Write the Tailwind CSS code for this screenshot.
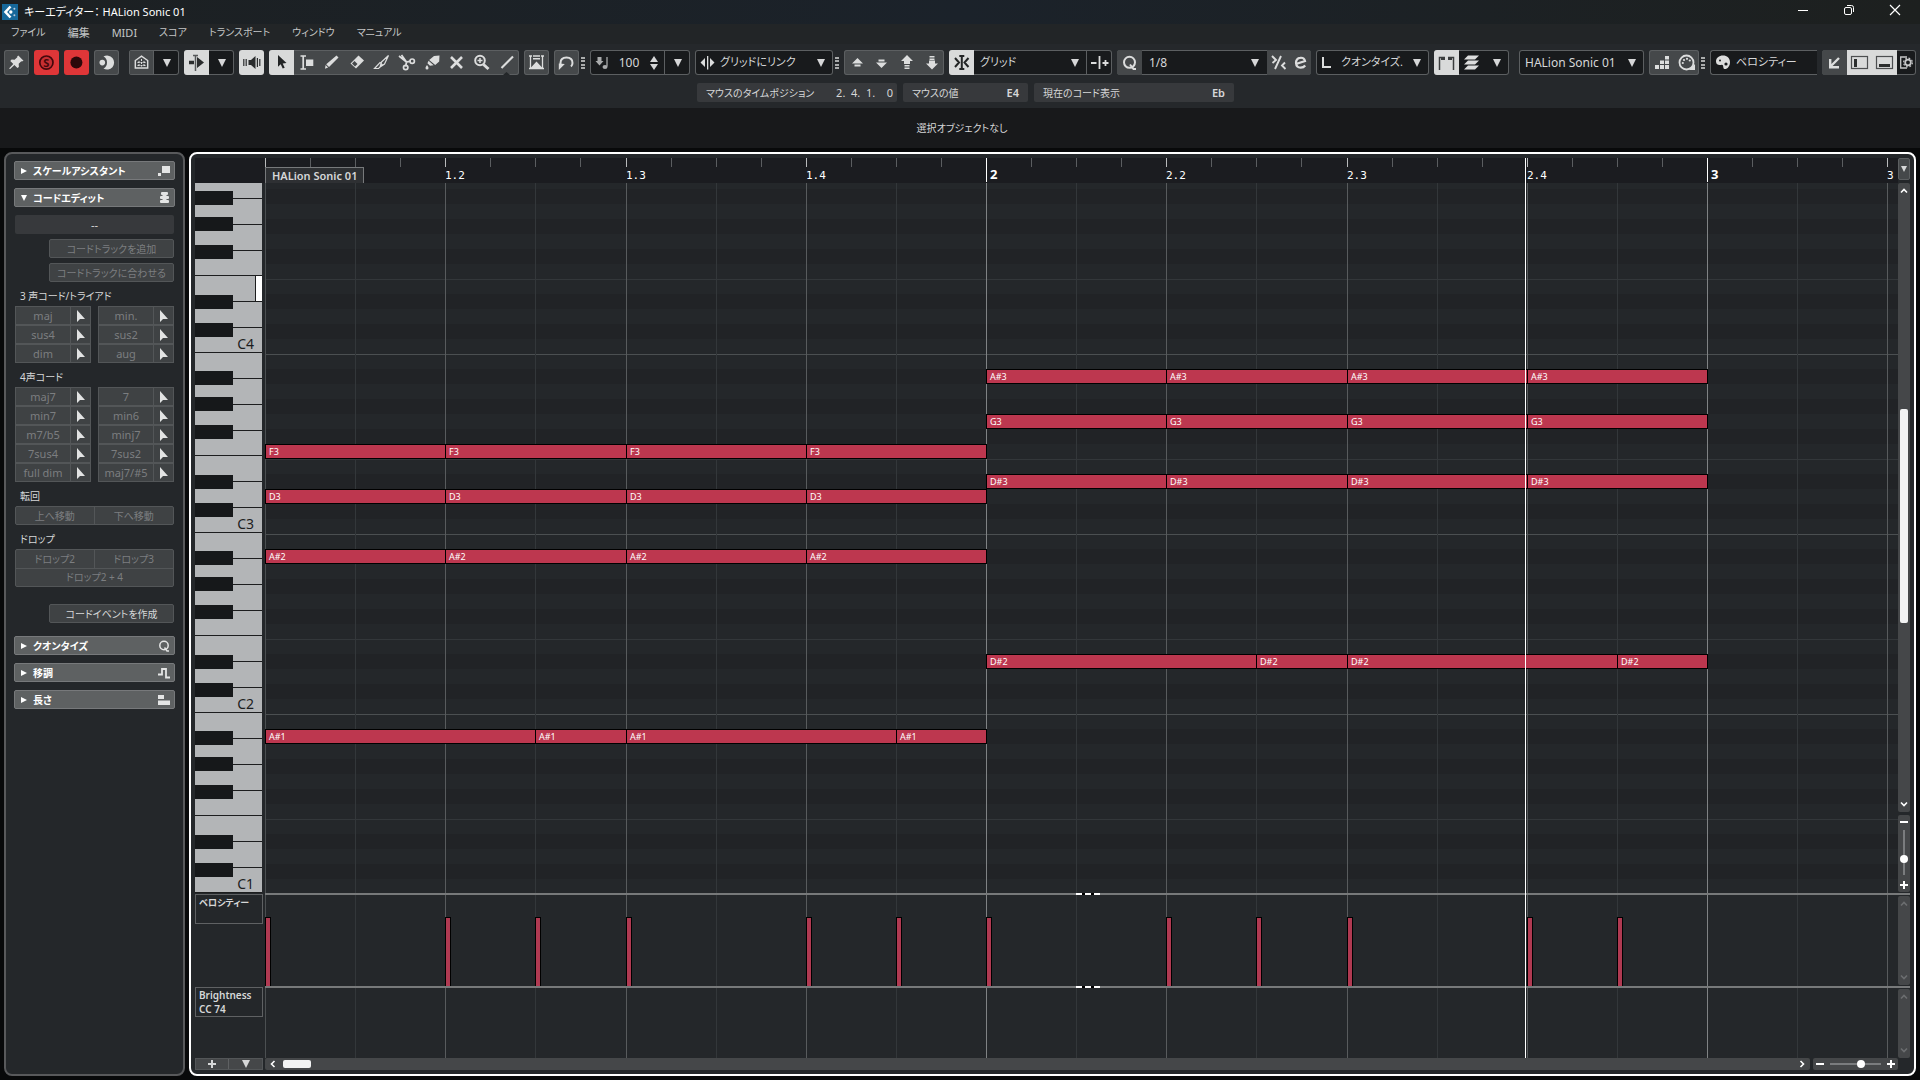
<!DOCTYPE html>
<html lang="ja">
<head>
    <meta charset="UTF-8">
    <meta name="viewport" content="width=device-width, initial-scale=1.0">
    <title>キーエディター： HALion Sonic 01</title>
    <script src="https://cdn.jsdelivr.net/npm/@tailwindcss/browser@4"></script>
</head>
<body class="h-screen overflow-hidden flex flex-col bg-[#08090a] text-[#d6d7d8] text-[11px] leading-none font-['Noto_Sans','Noto_Sans_CJK_JP',sans-serif] [font-feature-settings:'palt'] select-none">

    <!-- Shared shapes -->
    <svg class="hidden">
        <symbol id="tri" viewBox="0 0 8 8"><path d="M0 0h8L4 8z" fill="currentColor"/></symbol>
        <symbol id="cursor" viewBox="0 0 10 12"><path d="M1 0v12l3-3h5z" fill="currentColor"/></symbol>
        <symbol id="dots" viewBox="0 0 4 12"><path d="M0 1h4M0 4h4M0 8h4M0 11h4" stroke="currentColor" stroke-width="1.6"/></symbol>
        <symbol id="chev" viewBox="0 0 8 8"><path d="M1 5.5L4 2.5l3 3" fill="none" stroke="currentColor" stroke-width="1.6"/></symbol>
        <symbol id="plus" viewBox="0 0 8 8"><path d="M4 0v8M0 4h8" stroke="currentColor" stroke-width="2"/></symbol>
    </svg>

    <!-- Title bar -->
    <header class="h-6 shrink-0 flex items-center justify-between bg-linear-to-r from-[#1c2022] via-[#1b222a] to-[#1d201f]">
        <div class="flex items-center gap-1.5 pl-0.5 pb-px">
            <svg class="size-4" viewBox="0 0 16 16">
                <rect width="16" height="16" fill="#17689a"/>
                <path d="M8.5 2.5L3.5 8l5 5.5" fill="none" stroke="#fff" stroke-width="2.6"/>
                <circle cx="8.8" cy="8" r="1.7" fill="#fff"/><circle cx="12.4" cy="4.8" r="1" fill="#bcd"/><circle cx="12.4" cy="11.2" r="1" fill="#bcd"/>
            </svg>
            <h1 class="text-[11px] text-white whitespace-pre">キーエディター： HALion Sonic 01</h1>
        </div>
        <div class="flex h-full pb-1 pr-0.5 text-white">
            <button class="w-[46px] flex items-center justify-center" aria-label="最小化"><svg class="size-3" viewBox="0 0 12 12"><path d="M1 6.5h10" stroke="currentColor"/></svg></button>
            <button class="w-[46px] flex items-center justify-center" aria-label="元に戻す"><svg class="size-3" viewBox="0 0 12 12" fill="none" stroke="currentColor"><rect x="1.5" y="3.5" width="7" height="7" rx="1.5"/><path d="M4 1.5h4.5a2 2 0 0 1 2 2V8"/></svg></button>
            <button class="w-[46px] flex items-center justify-center" aria-label="閉じる"><svg class="size-3" viewBox="0 0 12 12"><path d="M1 1l10 10M11 1L1 11" stroke="currentColor" stroke-width="1.2"/></svg></button>
        </div>
    </header>

    <!-- Menu bar -->
    <nav class="h-5 shrink-0 flex items-center gap-[22px] pl-[11px] pb-1 bg-[#222527] text-[#c4c5c6] text-[10px]">
        <a href="#">ファイル</a>
        <a href="#" class="text-[11px]">編集</a>
        <a href="#" class="text-[11px]">MIDI</a>
        <a href="#">スコア</a>
        <a href="#">トランスポート</a>
        <a href="#">ウィンドウ</a>
        <a href="#">マニュアル</a>
    </nav>

    <!-- Toolbar -->
    <div class="h-16 shrink-0 bg-[#25282b] pt-1.5">
        <div class="flex h-[25px] gap-[5px] pl-1 pr-1 text-xs">
            <button class="w-[25px] shrink-0 rounded-[3px] bg-[#45484a] ring-1 ring-inset ring-[#5c5f61]" aria-label="ピン">
                <svg viewBox="0 0 25 25" fill="#dcdddd"><path d="M14.3 5.6l5.2 5.2-1.6.6-.6-.2-2.6 2.6.2 3.2-1.5 1.1-3-3-4.2 4-.9-.2.2-.9 3.8-4-3-3 1.3-1.5 3 .2 2.7-2.5-.1-.6z"/></svg>
            </button>
            <button class="w-[25px] shrink-0 rounded-[3px] bg-[#df3638]" aria-label="ソロ">
                <svg viewBox="0 0 25 25"><circle cx="12.4" cy="12.6" r="6.6" fill="#c52f33" stroke="#43080c" stroke-width="1.7"/><text x="12.4" y="16.7" text-anchor="middle" font-size="11" font-weight="700" fill="#43080c">S</text></svg>
            </button>
            <button class="w-[25px] shrink-0 rounded-[3px] bg-[#df3638]" aria-label="録音">
                <svg viewBox="0 0 25 25"><circle cx="12.4" cy="12.6" r="6" fill="#2c080a"/></svg>
            </button>
            <button class="w-[25px] shrink-0 rounded-[3px] bg-[#45484a] ring-1 ring-inset ring-[#5c5f61]" aria-label="レトロスペクティブ録音">
                <svg viewBox="0 0 25 25" fill="#dcdddd"><path d="M9.5 6.6a7 7 0 1 1 0 12 6.8 6.8 0 0 0 3.5-6 6.8 6.8 0 0 0-3.5-6z"/><circle cx="8.3" cy="12.6" r="2.8"/></svg>
            </button>

            <div class="ml-[5px] flex w-[50px] shrink-0 rounded-[3px] bg-[#181a1c] ring-1 ring-inset ring-[#5c5f61] overflow-hidden">
                <button class="w-[25px] bg-[#45484a] ring-1 ring-inset ring-[#5c5f61]" aria-label="ホーム">
                    <svg viewBox="0 0 25 25"><path d="M6.3 18V10.500L12.500 6.200l6.200 4.300V18z" fill="none" stroke="#dcdddd" stroke-width="1.4"/><path d="M8.500 12.500h8M8.500 15.500h8M12.500 9v7.500M10 11v6M15 11v6" stroke="#dcdddd" stroke-dasharray="2 1"/></svg>
                </button>
                <button class="w-[25px] flex items-center justify-center" aria-label="メニュー"><svg class="size-2"><use href="#tri"/></svg></button>
            </div>
            <div class="flex w-[50px] shrink-0 rounded-[3px] bg-[#181a1c] ring-1 ring-inset ring-[#5c5f61] overflow-hidden">
                <button class="w-[25px] bg-[#d9dada]" aria-label="オートスクロール">
                    <svg viewBox="0 0 25 25"><path d="M5 10.800h8V7l7 5.500-7 5.500v-3.800H5z" fill="#2a2c2d"/><path d="M11.500 4v17" stroke="#d9dada" stroke-width="3"/><path d="M11.500 5v16M9 5.500h5" stroke="#56585a" stroke-width="1.500"/></svg>
                </button>
                <button class="w-[25px] flex items-center justify-center" aria-label="メニュー"><svg class="size-2"><use href="#tri"/></svg></button>
            </div>
            <button class="w-[25px] shrink-0 rounded-[3px] bg-[#d9dada]" aria-label="試聴">
                <svg viewBox="0 0 25 25"><path d="M9.500 10h2.500l4.500-4v13l-4.500-4H9.500z" fill="#2a2c2d"/><path d="M4.800 9v7M7.200 9v7M18.400 8v9M20.800 9v7" stroke="#2a2c2d" stroke-width="1.200"/></svg>
            </button>

            <!-- Tools -->
            <div class="flex w-[250px] shrink-0 rounded-[3px] bg-[#45484a] ring-1 ring-inset ring-[#5c5f61] overflow-hidden">
                <button class="w-[25px] bg-[#d9dada]" aria-label="選択"><svg viewBox="0 0 25 25"><path d="M9 5l8.500 8-3.800.4 2 4.300-2 .9-2-4.400-2.700 2.600z" fill="#232526"/></svg></button>
                <button class="w-[25px]" aria-label="範囲選択"><svg viewBox="0 0 25 25"><path d="M6.500 6H12M6.500 19H12M9.200 6v13" stroke="#dcdddd" stroke-width="1.700"/><path d="M12 9.500h7.300V16H12z" fill="#dcdddd"/></svg></button>
                <button class="w-[25px]" aria-label="鉛筆"><svg viewBox="0 0 25 25" fill="#dcdddd"><path d="M17.500 5.500l2 2L10 17l-2.800-2.800zM6.600 15l2.500 2.500L6 18.800z"/></svg></button>
                <button class="w-[25px]" aria-label="消しゴム"><svg viewBox="0 0 25 25"><path d="M14.500 5.500l5.500 5-8 8-5.500-5z" fill="#dcdddd"/><path d="M8 13.500l3 3 2.500-2.500-3-3z" fill="#45484a"/></svg></button>
                <button class="w-[25px]" aria-label="トリム"><svg viewBox="0 0 25 25"><path d="M12.500 12l7-6.500-4 8.500-4.500 3zM11 12.500l2.500 2.500-4 3.500H5.500z" fill="none" stroke="#dcdddd" stroke-width="1.200"/></svg></button>
                <button class="w-[25px]" aria-label="はさみ"><svg viewBox="0 0 25 25" fill="none" stroke="#dcdddd" stroke-width="1.700"><path d="M5 6l7.500 6 4-.8M12.500 12l-.8 4.500M7.500 5l5 7"/><circle cx="18.200" cy="11.200" r="2.200"/><circle cx="11.700" cy="17.500" r="2.200"/></svg></button>
                <button class="w-[25px]" aria-label="のり"><svg viewBox="0 0 25 25" fill="#dcdddd"><path d="M15 6l5.500-.5-.3 6-4 3.500-6-5zM9.600 10.700l5 4.500-3.600.6-2.600-2.600zM8 15c1 1.600 1.500 2.300 1.500 3A1.500 1.500 0 0 1 8 19.500 1.500 1.500 0 0 1 6.500 18C6.500 17.300 7 16.600 8 15z"/></svg></button>
                <button class="w-[25px]" aria-label="ミュート"><svg viewBox="0 0 25 25"><path d="M7 7l11 11M18 7L7 18" stroke="#dcdddd" stroke-width="2.600"/></svg></button>
                <button class="w-[25px]" aria-label="ズーム"><svg viewBox="0 0 25 25" fill="none" stroke="#dcdddd"><circle cx="11" cy="10.500" r="4.800" stroke-width="2"/><path d="M14.500 14.500l5 4.500" stroke-width="3"/><path d="M8.500 10.500h5M11 8v5" stroke-width="1.500"/></svg></button>
                <button class="w-[25px]" aria-label="ライン"><svg viewBox="0 0 25 25"><path d="M7.500 18L19 6.500" stroke="#dcdddd" stroke-width="2.200"/><path d="M9 25l3.500-3 3.500 3z" fill="#232628"/></svg></button>
            </div>
            <button class="w-[25px] shrink-0 rounded-[3px] bg-[#45484a] ring-1 ring-inset ring-[#5c5f61]" aria-label="コントローラー">
                <svg viewBox="0 0 25 25"><path d="M5 6h3M17 6h3M5 18.500h15M6.500 6v12M18.500 6v12" stroke="#dcdddd" stroke-width="1.300"/><path d="M6.500 18l6-6.500 6 6.500zM9 5.300h7v1.400H9zM9 8h7v1.500H9z" fill="#dcdddd"/></svg>
            </button>
            <div class="flex shrink-0 items-center gap-0.5">
                <button class="w-[25px] h-full rounded-[3px] bg-[#45484a] ring-1 ring-inset ring-[#5c5f61]" aria-label="カーブ">
                    <svg viewBox="0 0 25 25"><path d="M6.500 16.500V13c0-3.500 2.500-5.500 6-5.500s6 2 6 5.500c0 1.500-.5 2.700-1.500 3.500" fill="none" stroke="#dcdddd" stroke-width="2"/><path d="M4.800 13.500l6 .5-6 6z" fill="#dcdddd"/></svg>
                </button>
                <svg class="h-3 w-1"><use href="#dots"/></svg>
            </div>

            <!-- Insert velocity -->
            <div class="flex w-[100px] shrink-0 items-center rounded-[3px] bg-[#181a1c] ring-1 ring-inset ring-[#5c5f61]">
                <svg class="size-[25px]" viewBox="0 0 25 25"><path d="M7.500 7h4v4h2l-4 4.500L5.500 11h2z" fill="#a9abac"/><path d="M17 7v9.500" stroke="#a9abac" stroke-width="1.300"/><ellipse cx="15" cy="17" rx="2.500" ry="2" fill="#a9abac"/></svg>
                <input class="w-7 text-center bg-transparent" value="100" aria-label="挿入ベロシティー">
                <span class="flex-1 flex flex-col items-center gap-0.5">
                    <svg class="h-1.5 w-2" viewBox="0 0 8 6"><path d="M0 6h8L4 0z" fill="currentColor"/></svg>
                    <svg class="h-1.5 w-2" viewBox="0 0 8 6"><path d="M0 0h8L4 6z" fill="currentColor"/></svg>
                </span>
                <button class="w-[26px] h-full flex items-center justify-center border-l border-[#5c5f61]" aria-label="プリセット"><svg class="size-2"><use href="#tri"/></svg></button>
            </div>
            <div class="flex shrink-0 items-center gap-0.5">
                <div class="flex w-[138px] h-full items-center pr-2 rounded-[3px] bg-[#181a1c] ring-1 ring-inset ring-[#5c5f61]">
                    <svg class="size-[25px]" viewBox="0 0 25 25" fill="#dcdddd"><path d="M10 8v9l-4.500-4.500zM15 8v9l4.500-4.500zM12 6h1.300v13.500H12z"/></svg>
                    <select class="appearance-none flex-1 min-w-0 bg-transparent text-[11px]" aria-label="長さクオンタイズ"><option>グリッドにリンク</option></select>
                    <svg class="size-2"><use href="#tri"/></svg>
                </div>
                <svg class="h-3 w-1"><use href="#dots"/></svg>
            </div>
            <!-- Nudge -->
            <div class="flex w-[100px] shrink-0 rounded-[3px] bg-[#45484a] ring-1 ring-inset ring-[#5c5f61] text-[#dcdddd]">
                <button class="w-[25px]" aria-label="半音上へ"><svg viewBox="0 0 25 25" fill="currentColor"><path d="M13.500 8l5.500 5.500H8zM10.500 14.500h6v2h-6z"/></svg></button>
                <button class="w-[25px]" aria-label="半音下へ"><svg viewBox="0 0 25 25" fill="currentColor"><path d="M12.500 18L7 12.500h11zM9.500 9.500h6v2h-6z"/></svg></button>
                <button class="w-[25px]" aria-label="オクターブ上へ"><svg viewBox="0 0 25 25" fill="currentColor"><path d="M13 5l6 6h-3v3h-6v-3H7zM10.500 15h5v1.500h-5zM10.500 17.500h5V19h-5z"/></svg></button>
                <button class="w-[25px]" aria-label="オクターブ下へ"><svg viewBox="0 0 25 25" fill="currentColor"><path d="M13 19.500l-6-6h3v-3h6v3h3zM10.500 8.500h5V10h-5zM10.500 6h5v1.500h-5z"/></svg></button>
            </div>
            <!-- Snap -->
            <div class="flex w-[163px] shrink-0 items-center rounded-[3px] bg-[#181a1c] ring-1 ring-inset ring-[#5c5f61] overflow-hidden">
                <button class="w-[25px] bg-[#d9dada]" aria-label="スナップ"><svg viewBox="0 0 25 25"><path d="M10.300 6h5M10.300 19h5M12.800 6v13M6 8l4 4.500L6 17M19.500 8l-4 4.500 4 4.500" fill="none" stroke="#232526" stroke-width="2"/></svg></button>
                <select class="appearance-none flex-1 min-w-0 pl-1.5 bg-transparent text-[11px]" aria-label="スナップの種類"><option>グリッド</option></select>
                <svg class="size-2 mr-[7px]"><use href="#tri"/></svg>
                <button class="w-[26px] h-full border-l border-[#5c5f61]" aria-label="グリッドの間隔"><svg viewBox="0 0 25 25"><path d="M4 13h5.500M12.500 6v13M15.500 13h6M18.500 10v6" stroke="#dcdddd" stroke-width="1.800"/></svg></button>
            </div>
            <!-- Quantize -->
            <div class="flex w-[194px] shrink-0 items-center rounded-[3px] bg-[#181a1c] ring-1 ring-inset ring-[#5c5f61] overflow-hidden">
                <button class="w-[25px] bg-[#45484a]" aria-label="クオンタイズを適用"><svg viewBox="0 0 25 25" fill="none" stroke="#dcdddd" stroke-width="2"><circle cx="12.500" cy="12.300" r="5.500"/><path d="M13 14.500l3.500 4.500h2.500"/></svg></button>
                <select class="appearance-none flex-1 min-w-0 pl-[7px] bg-transparent" aria-label="クオンタイズ値"><option>1/8</option></select>
                <svg class="size-2 mr-2"><use href="#tri"/></svg>
                <button class="w-[22px] h-full bg-[#45484a]" aria-label="ソフトクオンタイズ"><svg viewBox="0 0 22 25" fill="none" stroke="#dcdddd" stroke-width="1.900"><path d="M8 19l6-13M5 6l4 4-3.500 3M18 12.500l-3 3 3.500 3.500"/></svg></button>
                <button class="w-[22px] h-full bg-[#45484a]" aria-label="クオンタイズパネル"><svg viewBox="0 0 22 25" fill="none" stroke="#dcdddd" stroke-width="2.200"><path d="M7 14l9-3c-.5-2-2.500-3.500-4.800-3.200C8.500 8 6.800 10.300 7 13s2 4.700 4.700 4.700c2 0 3.500-.8 4.500-2.200"/></svg></button>
            </div>
            <div class="flex w-[113px] shrink-0 items-center pr-2 rounded-[3px] bg-[#181a1c] ring-1 ring-inset ring-[#5c5f61]">
                <svg class="size-[25px]" viewBox="0 0 25 25"><path d="M7 7v10h8" fill="none" stroke="#dcdddd" stroke-width="2"/></svg>
                <select class="appearance-none flex-1 min-w-0 bg-transparent text-[11px]" aria-label="長さ"><option>クオンタイズ.</option></select>
                <svg class="size-2"><use href="#tri"/></svg>
            </div>
            <div class="flex w-[75px] shrink-0 items-center rounded-[3px] bg-[#181a1c] ring-1 ring-inset ring-[#5c5f61] overflow-hidden">
                <button class="w-[25px] bg-[#d9dada]" aria-label="パート境界"><svg viewBox="0 0 25 25"><path d="M5.500 20V7.500H11M14 7.500h5.500V20" fill="none" stroke="#3a3c3d" stroke-width="1.500"/><path d="M7 7h4v3H7zM14 7h4v3h-4z" fill="#3a3c3d"/></svg></button>
                <button class="w-[25px]" aria-label="パート編集"><svg viewBox="0 0 25 25" fill="#dcdddd"><path d="M9 5.500h11l-4 4H5zM9 10.500h11l-4 4H5zM9 15.500h11l-4 4H5z"/></svg></button>
                <button class="w-[25px] flex items-center justify-center" aria-label="メニュー"><svg class="size-2"><use href="#tri"/></svg></button>
            </div>
            <div class="ml-[5px] flex w-[125px] shrink-0 items-center pl-1.5 pr-2 rounded-[3px] bg-[#181a1c] ring-1 ring-inset ring-[#5c5f61]">
                <select class="appearance-none flex-1 min-w-0 bg-transparent" aria-label="編集パート"><option>HALion Sonic 01</option></select>
                <svg class="size-2"><use href="#tri"/></svg>
            </div>
            <div class="flex shrink-0 items-center gap-0.5">
                <div class="flex w-[50px] h-full rounded-[3px] bg-[#45484a] ring-1 ring-inset ring-[#5c5f61]">
                    <button class="w-[25px]" aria-label="ステップ入力"><svg viewBox="0 0 25 25" fill="#dcdddd"><path d="M6 15h4v4H6zM11 15h4v4h-4zM16 15h4v4h-4zM11 10.500h4v3.500h-4zM16 10.500h4v3.500h-4zM16 6h4v3.500h-4z"/></svg></button>
                    <button class="w-[25px]" aria-label="MIDI 入力"><svg viewBox="0 0 25 25"><circle cx="12.500" cy="12.500" r="7" fill="none" stroke="#dcdddd" stroke-width="1.800"/><g fill="#dcdddd"><circle cx="8.800" cy="13" r="1.100"/><circle cx="10" cy="10" r="1.100"/><circle cx="13" cy="8.800" r="1.100"/><circle cx="15.800" cy="10.500" r="1.100"/><path d="M21 14v6h-6z"/></g></svg></button>
                </div>
                <svg class="h-3 w-1"><use href="#dots"/></svg>
            </div>
            <!-- Event colours -->
            <div class="flex flex-1 min-w-0 items-center rounded-l-[3px] border border-r-0 border-[#5c5f61] bg-[#181a1c]">
                <svg class="size-[25px] shrink-0" viewBox="0 0 25 25"><path d="M12 5.500c4 0 7 2.700 7 6.700 0 3.800-2.500 6.800-5 6.800-2 0-1.500-2-2-3.500s-2-.5-3.500-.5-3.500-.8-3.500-3.500c0-3.500 3-6 7-6z" fill="#dcdddd"/><circle cx="9" cy="10.500" r="1" fill="#181a1c"/><circle cx="15" cy="14" r="1.600" fill="#181a1c"/></svg>
                <select class="appearance-none flex-1 min-w-0 bg-transparent text-[11px]" aria-label="イベントカラー"><option>ベロシティー</option></select>
            </div>
            <!-- Layout zones -->
            <div class="flex w-[94px] shrink-0 rounded-[3px] bg-[#181a1c] ring-1 ring-inset ring-[#5c5f61] overflow-hidden">
                <button class="w-[25px] shrink-0 bg-[#45484a]" aria-label="下ゾーンで開く"><svg viewBox="0 0 25 25" fill="none" stroke="#dcdddd" stroke-width="2.400"><path d="M17 8l-8 8M8.200 9v8.200H17"/></svg></button>
                <button class="w-[25px] shrink-0 bg-[#d9dada]" aria-label="左ゾーン"><svg viewBox="0 0 25 25"><rect x="4.500" y="6.500" width="16" height="12" fill="none" stroke="#4c4e50" stroke-width="1.200"/><path d="M7 9h3v8H7z" fill="#2c2e2f"/></svg></button>
                <button class="w-[25px] shrink-0 bg-[#d9dada]" aria-label="下ゾーン"><svg viewBox="0 0 25 25"><rect x="4.500" y="6.500" width="16" height="12" fill="none" stroke="#4c4e50" stroke-width="1.200"/><path d="M7 14h11v3H7z" fill="#2c2e2f"/></svg></button>
                <button class="w-[19px] shrink-0" aria-label="レイアウト設定"><svg viewBox="0 0 19 25" fill="none" stroke="#c6c7c8"><path d="M10 7H3.700v11H10" stroke-width="1.300"/><circle cx="11" cy="12.500" r="2.800" stroke-width="1.800"/><circle cx="11" cy="12.500" r="4.400" stroke-width="1.200" stroke-dasharray="1.800 1.650"/></svg></button>
            </div>
        </div>

        <!-- Info line -->
        <dl class="mt-2 flex justify-center gap-1.5 pl-[11px]">
            <div class="flex h-[19px] w-[200px] items-center justify-between pl-[9px] pr-1 bg-[#37393c] rounded-xs"><dt class="text-[10px]">マウスのタイムポジション</dt><dd class="whitespace-pre">2.  4.  1.    0</dd></div>
            <div class="flex h-[19px] w-[125px] items-center justify-between px-[9px] bg-[#37393c] rounded-xs"><dt class="text-[10px]">マウスの値</dt><dd class="font-semibold">E4</dd></div>
            <div class="flex h-[19px] w-[200px] items-center justify-between px-[9px] bg-[#37393c] rounded-xs"><dt class="text-[10px]">現在のコード表示</dt><dd class="font-semibold">Eb</dd></div>
        </dl>
    </div>

    <!-- Status line -->
    <p class="h-10 shrink-0 flex items-center justify-center pl-1 bg-[#18191b] text-[10px]">選択オブジェクトなし</p>

    <main class="flex-1 min-h-0 flex gap-1 p-1">
        <!-- Inspector -->
        <aside class="w-[181px] shrink-0 flex flex-col px-2 pt-[7px] rounded-lg border-2 border-[#58595b] bg-[#24272a] text-[10px]">
            <button class="h-[19px] flex items-center pl-1.5 pr-1 gap-1.5 rounded-xs border border-[#77797b] bg-[#5e6162] text-white font-bold">
                <svg class="size-1.5 -rotate-90"><use href="#tri"/></svg>スケールアシスタント
                <svg class="ml-auto size-3" viewBox="0 0 12 12" fill="#e4e5e5"><path d="M4 1h8v7H4zM0 8h3v3H0z"/></svg>
            </button>
            <button class="mt-2 h-[19px] flex items-center pl-1.5 pr-1 gap-1.5 rounded-xs border border-[#77797b] bg-[#5e6162] text-white font-bold">
                <svg class="size-1.5"><use href="#tri"/></svg>コードエディット
                <svg class="ml-auto size-3" viewBox="0 0 12 12" fill="#e4e5e5"><rect x="3" width="7" height="3" rx="1"/><rect x="2" y="4" width="9" height="3" rx="1"/><rect x="2" y="8" width="9" height="3" rx="1"/><path d="M4.500 2h4v8h-4z"/></svg>
            </button>

            <div class="px-px flex flex-col">
                <output class="mt-2 h-[19px] flex items-center justify-center rounded-xs bg-[#37393c] text-[11px]">--</output>
                <button class="mt-[5px] ml-[34px] h-[19px] rounded-xs border border-[#535658] bg-[#3f4244] text-[#7c7e80]" disabled>コードトラックを追加</button>
                <button class="mt-[5px] ml-[34px] h-[19px] rounded-xs border border-[#535658] bg-[#3f4244] text-[#7c7e80]" disabled>コードトラックに合わせる</button>

                <h2 class="h-6 flex items-center pl-[5px] pt-1">3 声コード/トライアド</h2>
                <div id="triads" class="grid grid-cols-2 gap-x-[7px] text-[11px]"></div>
                <h2 class="h-6 flex items-center pl-[5px] pt-1">4声コード</h2>
                <div id="sevenths" class="grid grid-cols-2 gap-x-[7px] text-[11px]"></div>

                <h2 class="h-6 flex items-center pl-[5px] pt-1">転回</h2>
                <div class="h-[19px] grid grid-cols-2 rounded-xs border border-[#535658] bg-[#3f4244] text-[#7c7e80]">
                    <button class="border-r border-[#535658]" disabled>上へ移動</button>
                    <button disabled>下へ移動</button>
                </div>
                <h2 class="h-6 flex items-center pl-[5px] pt-1">ドロップ</h2>
                <div class="h-[38px] grid grid-cols-2 rounded-xs border border-[#535658] bg-[#3f4244] text-[#7c7e80]">
                    <button class="border-r border-b border-[#535658]" disabled>ドロップ2</button>
                    <button class="border-b border-[#535658]" disabled>ドロップ3</button>
                    <button class="col-span-2" disabled>ドロップ2 + 4</button>
                </div>
                <button class="mt-[17px] ml-[34px] h-[19px] rounded-xs border border-[#535658] bg-[#3f4244]">コードイベントを作成</button>
            </div>

            <button class="mt-[13px] h-[19px] flex items-center pl-1.5 pr-1 gap-1.5 rounded-xs border border-[#77797b] bg-[#5e6162] text-white font-bold">
                <svg class="size-1.5 -rotate-90"><use href="#tri"/></svg>クオンタイズ
                <svg class="ml-auto size-3" viewBox="0 0 12 12" fill="none" stroke="#e4e5e5" stroke-width="1.500"><circle cx="6" cy="5.500" r="4.200"/><path d="M6.500 7.500l2.500 3.500h2"/></svg>
            </button>
            <button class="mt-2 h-[19px] flex items-center pl-1.5 pr-1 gap-1.5 rounded-xs border border-[#77797b] bg-[#5e6162] text-white font-bold">
                <svg class="size-1.5 -rotate-90"><use href="#tri"/></svg>移調
                <svg class="ml-auto size-3" viewBox="0 0 12 12" fill="none" stroke="#e4e5e5" stroke-width="1.800"><path d="M0 7.500h4V2h4v8.500h4"/></svg>
            </button>
            <button class="mt-2 h-[19px] flex items-center pl-1.5 pr-1 gap-1.5 rounded-xs border border-[#77797b] bg-[#5e6162] text-white font-bold">
                <svg class="size-1.5 -rotate-90"><use href="#tri"/></svg>長さ
                <svg class="ml-auto size-3" viewBox="0 0 12 12" fill="#e4e5e5"><path d="M0 1h6v4H0zM0 6.500h12V11H0z"/></svg>
            </button>
        </aside>

        <!-- Editor -->
        <section class="relative flex-1 min-w-0 grid grid-cols-[70px_1fr_12px] grid-rows-[25px_1fr_2px_91px_2px_70px_12px] p-1 rounded-lg border-2 border-white bg-[#24272a]">
            <!-- Ruler -->
            <div class="bg-[#1b1c20]"></div>
            <div id="ruler" class="relative overflow-hidden bg-[#1b1c20] text-white">
                <div class="absolute z-10 left-0 top-[9px] h-4 px-1.5 flex items-center border border-[#77797b] border-b-0 bg-[#2e3033] text-[#d6d7d8] font-semibold">HALion Sonic 01</div>
            </div>
            <button class="h-[22px] flex items-center justify-center rounded-xs border border-[#5c5f61] bg-[#45484a]" aria-label="ルーラーの表示形式"><svg class="size-1.5"><use href="#tri"/></svg></button>

            <!-- Keyboard and notes -->
            <div id="keys" class="mr-[3px] min-h-0 overflow-hidden flex flex-col justify-end text-sm leading-none text-[#1c1d1e]"></div>
            <div id="roll" class="relative min-h-0 overflow-hidden"></div>
            <div class="min-h-0 flex flex-col gap-[3px] pb-px">
                <div class="relative flex-1 min-h-0 flex flex-col justify-between items-center rounded-xs bg-[#454749] text-white">
                    <svg class="size-2 mt-1"><use href="#chev"/></svg>
                    <div class="absolute top-[36%] bottom-[30%] w-2 rounded-xs bg-[#f2f3f3]"></div>
                    <svg class="size-2 mb-1 rotate-180"><use href="#chev"/></svg>
                </div>
                <div class="h-[77px] flex flex-col items-center justify-between pb-[3px] rounded-xs bg-[#454749] text-white">
                    <span class="mt-1.5 h-0.5 w-2 bg-white"></span>
                    <div class="relative h-[45px] w-0.5 bg-[#7a7c7e]"><span class="absolute -left-[3px] top-[25px] size-2 rounded-full bg-white"></span></div>
                    <svg class="size-2"><use href="#plus"/></svg>
                </div>
            </div>

            <div></div>
            <div class="col-span-2 flex justify-center bg-[#77797a]"><span class="w-6 border-t-2 border-dashed border-white bg-black"></span></div>

            <!-- Velocity lane -->
            <div class="mr-0.5 h-[30px] pl-[3px] pt-[3px] -mt-px border border-[#5f6163] text-[9px] font-semibold">ベロシティー</div>
            <div id="velocity" class="relative overflow-hidden"></div>
            <div class="my-px flex flex-col justify-between items-center py-1 rounded-xs bg-[#454749] text-[#6c6e70]">
                <svg class="size-2"><use href="#chev"/></svg>
                <svg class="size-2 rotate-180"><use href="#chev"/></svg>
            </div>

            <div></div>
            <div class="col-span-2 flex justify-center bg-[#77797a]"><span class="w-6 border-t-2 border-dashed border-white bg-black"></span></div>

            <!-- Controller lane -->
            <div class="mr-0.5 h-[30px] pl-[3px] -mt-px border border-[#5f6163] text-[10px] leading-[14px] font-semibold">Brightness<br>CC 74</div>
            <div id="brightness" class="relative overflow-hidden"></div>
            <div class="mt-px flex flex-col justify-between items-center py-1 rounded-xs bg-[#454749] text-[#6c6e70]">
                <svg class="size-2"><use href="#chev"/></svg>
                <svg class="size-2 rotate-180"><use href="#chev"/></svg>
            </div>

            <!-- Bottom bar -->
            <div class="mr-0.5 grid grid-cols-2 bg-[#454749] border border-[#535658]">
                <button class="flex items-center justify-center border-r border-[#5f6163]" aria-label="レーンを追加"><svg class="size-2"><use href="#plus"/></svg></button>
                <button class="flex items-center justify-center" aria-label="レーン設定"><svg class="size-2"><use href="#tri"/></svg></button>
            </div>
            <div class="flex gap-[3px] text-white">
                <div class="flex-1 flex items-center gap-1.5 px-1 rounded-xs bg-[#454749]">
                    <svg class="size-2 -rotate-90"><use href="#chev"/></svg>
                    <div class="h-2 w-7 rounded-xs bg-[#f2f3f3]"></div>
                    <svg class="size-2 ml-auto rotate-90"><use href="#chev"/></svg>
                </div>
                <div class="w-[85px] flex items-center gap-1.5 px-[3px] rounded-xs bg-[#454749]">
                    <span class="h-0.5 w-2 bg-white"></span>
                    <div class="relative flex-1 h-0.5 bg-[#7a7c7e]"><span class="absolute left-[27px] -top-[3px] size-2 rounded-full bg-white"></span></div>
                    <svg class="size-2"><use href="#plus"/></svg>
                </div>
            </div>

            <!-- Playhead -->
            <div id="cursor-lane" class="absolute inset-0 col-start-2 col-end-3 row-start-1 row-end-7 pointer-events-none"></div>
        </section>
    </main>

    <script>
        const BEAT = 180.25;  // px per quarter note
        const ROW = 15;       // px per semitone
        const BEATS = 9;
        const NAMES = ['C', 'C#', 'D', 'D#', 'E', 'F', 'F#', 'G', 'G#', 'A', 'A#', 'B'];
        const x = beat => Math.round(beat * BEAT);

        function add(parent, className, style = {}, text = '') {
            const el = document.createElement('div');
            el.className = className;
            Object.assign(el.style, style);
            el.textContent = text;
            parent.appendChild(el);
            return el;
        }

        // [name, start beat, length in beats]
        const notes = [];
        for (let i = 0; i < 4; i++) {
            ['F3', 'D3', 'A#2'].forEach(n => notes.push([n, i, 1]));
            ['A#3', 'G3', 'D#3'].forEach(n => notes.push([n, i + 4, 1]));
        }
        [[0, 1.5], [1.5, 0.5], [2, 1.5], [3.5, 0.5]].forEach(([start, len]) => {
            notes.push(['A#1', start, len]);
            notes.push(['D#2', start + 4, len]);
        });

        // Chord buttons
        function chordPad(id, names) {
            const pad = document.getElementById(id);
            names.forEach(name => {
                const row = add(pad, 'h-[19px] flex border border-[#535658] bg-[#3f4244]');
                row.innerHTML = `<button class="flex-1 text-[#7c7e80]" disabled>${name}</button>
                    <button class="w-5 flex items-center justify-center border-l border-[#535658] text-[#e2e3e3]" aria-label="${name}"><svg class="h-3 w-2.5"><use href="#cursor"/></svg></button>`;
            });
        }
        chordPad('triads', ['maj', 'min.', 'sus4', 'sus2', 'dim', 'aug']);
        chordPad('sevenths', ['maj7', '7', 'min7', 'min6', 'm7/b5', 'minj7', '7sus4', '7sus2', 'full dim', 'maj7/#5']);

        // Ruler
        const ruler = document.getElementById('ruler');
        for (let q = 0; q <= BEATS * 4; q++) {
            const beat = q / 4;
            const left = x(beat) + 'px';
            if (beat > 0 && beat % 4 === 0) {
                add(ruler, 'absolute top-0 w-px h-6 bg-white', { left });
                add(ruler, 'absolute top-[10px] pl-1 text-[13px] font-bold', { left }, String(beat / 4 + 1));
            } else if (q % 4 === 0) {
                add(ruler, 'absolute top-0 w-px h-[9px] bg-[#b9babb]', { left });
                // only the bar number fits beside the last line
                const label = beat === BEATS ? '3' : `${Math.floor(beat / 4) + 1}.${beat % 4 + 1}`;
                if (beat > 0) add(ruler, "absolute top-3 text-[11px] font-['DejaVu_Sans_Mono',monospace]", { left }, label);
            } else {
                add(ruler, 'absolute top-0 w-px h-[9px] bg-[#5b5d60]', { left });
            }
        }

        // Keyboard, top octave first
        const keys = document.getElementById('keys');
        for (let octave = 4; octave >= 1; octave--) {
            const el = add(keys, 'relative shrink-0 h-[180px] grid grid-rows-[26px_26px_26px_25px_26px_26px_25px] bg-[#b3b5b7]');
            ['B', 'A', 'G', 'F', 'E', 'D', 'C'].forEach(k => {
                const key = add(el, 'relative flex items-end justify-end pr-2 pb-px border-b border-[#1c1d1e]', {}, k === 'C' ? 'C' + octave : '');
                if (k === 'E' && octave === 4) add(key, 'absolute right-0 inset-y-0 w-[7px] border-l border-[#1c1d1e] bg-white');
            });
            [18, 44, 72, 122, 150].forEach(top => add(el, 'absolute left-0 w-[38px] h-3.5 bg-[#16181a]', { top: top + 'px' }));
        }

        // Rows, beat lines
        const roll = document.getElementById('roll');
        for (let p = 0; p < 48; p++) {
            const name = NAMES[p % 12];
            let cls = 'absolute inset-x-0 h-[15px]';
            if (name.includes('#')) cls += ' bg-[#212326]';
            if (name === 'B') cls += ' border-t border-[#4b4f51]';
            if (name === 'E') cls += ' border-t border-[#33373a]';
            add(roll, cls, { bottom: p * ROW - 1 + 'px' });
        }
        ['roll', 'velocity', 'brightness'].forEach(id => {
            const lane = document.getElementById(id);
            for (let h = 0; h <= BEATS * 2; h++) {
                let cls = 'absolute inset-y-0 w-px bg-[#33373a]';
                if (h % 2 === 0) cls = 'absolute inset-y-0 w-px bg-[#585b5d]';
                if (h % 8 === 0) cls = 'absolute inset-y-0 w-px bg-[#7f8284]';
                if (h === 0) cls = 'absolute inset-y-0 w-px bg-[#4b4f51]';
                add(lane, cls, { left: x(h / 2) + 'px' });
            }
        });

        // Notes and their velocities
        const velocity = document.getElementById('velocity');
        notes.forEach(([name, start, len]) => {
            const pitch = NAMES.indexOf(name.slice(0, -1)) + (name.slice(-1) - 1) * 12;
            add(roll, 'absolute h-[15px] pl-[3px] flex items-center border border-black bg-[#bd374f] text-white text-[9px]', {
                left: x(start) + 'px',
                width: x(start + len) - x(start) + 1 + 'px',
                bottom: pitch * ROW - 1 + 'px'
            }, name);
        });
        new Set(notes.map(n => n[1])).forEach(start => {
            add(velocity, 'absolute bottom-0 w-1.5 border border-b-0 border-black bg-[#b03a52]', { left: x(start) + 'px', height: '76%' });
        });

        add(document.getElementById('cursor-lane'), 'absolute inset-y-0 w-px bg-white', { left: x(6.99) + 'px' });
    </script>
</body>
</html>
